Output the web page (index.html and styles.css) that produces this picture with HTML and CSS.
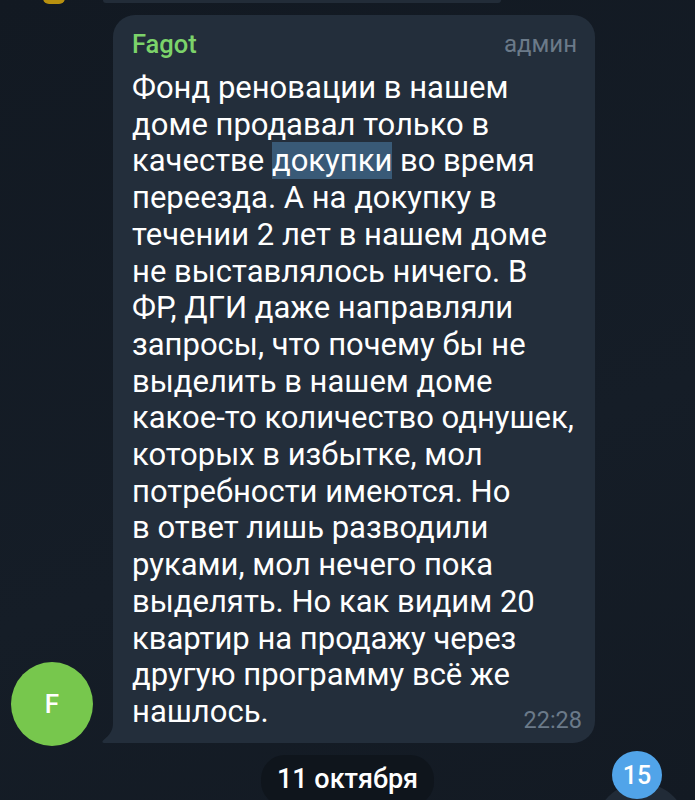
FILE: index.html
```html
<!DOCTYPE html>
<html lang="ru">
<head>
<meta charset="utf-8">
<link rel="stylesheet" href="styles.css">
</head>
<body>
<div class="screen">
  <div class="prev">
    <div class="prev-avatar"></div>
    <div class="prev-bubble"></div>
  </div>
  <div class="msg-row">
    <div class="avatar">F</div>
    <div class="bubble">
      <svg class="tail" width="14" height="20" viewBox="0 0 14 20"><path d="M14 0 V20 H2 C0 20 0 18 1.5 17 C8 12 11 7 11 0 Z" fill="#232e3b"/></svg>
      <div class="head">
        <span class="name">Fagot</span>
        <span class="role">админ</span>
      </div>
      <div class="text">Фонд реновации в нашем<br>доме продавал только в<br>качестве <span class="sel">докупки</span> во время<br>переезда. А на докупку в<br>течении 2 лет в нашем доме<br>не выставлялось ничего. В<br>ФР, ДГИ даже направляли<br>запросы, что почему бы не<br>выделить в нашем доме<br>какое-то количество однушек,<br>которых в избытке, мол<br>потребности имеются. Но<br>в ответ лишь разводили<br>руками, мол нечего пока<br>выделять. Но как видим 20<br>квартир на продажу через<br>другую программу всё же<br>нашлось.</div>
      <span class="time">22:28</span>
    </div>
  </div>
  <div class="date-row">
    <span class="date">11 октября</span>
  </div>
  <div class="fab"></div>
  <div class="badge">15</div>
</div>
</body>
</html>
```
FILE: styles.css
```css
html, body {
  margin: 0;
  padding: 0;
}
body {
  background: #131a23;
  font-family: Roboto, "Noto Sans", sans-serif;
  width: 695px;
  height: 800px;
  overflow: hidden;
}
.screen {
  position: relative;
  width: 695px;
  height: 800px;
  overflow: hidden;
  background: linear-gradient(160deg, #121922 0%, #151d27 60%, #131a23 100%);
}
.prev {
  display: flex;
  align-items: flex-start;
  height: 15px;
}
.prev-avatar {
  width: 22px;
  height: 6px;
  margin-left: 43px;
  margin-top: -2px;
  background: #b8900f;
  border-radius: 0 0 11px 11px;
}
.prev-bubble {
  width: 398px;
  height: 3px;
  margin-left: 38px;
  background: #222c38;
  border-radius: 0 0 10px 10px;
}
.msg-row {
  display: flex;
  align-items: flex-end;
}
.avatar {
  width: 82px;
  height: 84px;
  border-radius: 50%;
  background: #77c74d;
  color: #fff;
  font-size: 26px;
  font-weight: 500;
  display: flex;
  align-items: center;
  justify-content: center;
  margin-left: 11px;
  margin-right: 20px;
  margin-bottom: -3px;
  flex: none;
}
.bubble {
  position: relative;
  width: 482px;
  box-sizing: border-box;
  background: #232e3b;
  border-radius: 22px 22px 22px 0;
  padding: 14px 18px 12px 19px;
}
.tail {
  position: absolute;
  left: -11px;
  bottom: 0;
}
.head {
  display: flex;
  justify-content: space-between;
  align-items: center;
  height: 30px;
}
.name {
  color: #7cd36a;
  font-size: 25.5px;
  font-weight: 500;
}
.role {
  color: #6b7a89;
  font-size: 24px;
}
.text {
  margin-top: 11px;
  color: #ffffff;
  font-size: 31px;
  line-height: 36.7px;
}
.sel {
  background: #395a77;
}
.time {
  position: absolute;
  right: 13px;
  bottom: 9px;
  color: #6b7a89;
  font-size: 23.5px;
}
.date-row {
  display: flex;
  justify-content: center;
  margin-top: 12px;
}
.date {
  background: #0f151c;
  color: #ffffff;
  font-size: 27px;
  font-weight: 500;
  padding: 8px 16px 11px;
  border-radius: 24px;
}
.fab {
  position: absolute;
  left: 595px;
  top: 783px;
  width: 92px;
  height: 92px;
  border-radius: 50%;
  background: #212b37;
}
.badge {
  position: absolute;
  left: 612px;
  top: 751px;
  width: 50px;
  height: 48px;
  border-radius: 50%;
  background: #51a4e9;
  color: #fff;
  font-size: 25px;
  font-weight: 500;
  display: flex;
  align-items: center;
  justify-content: center;
}
```
